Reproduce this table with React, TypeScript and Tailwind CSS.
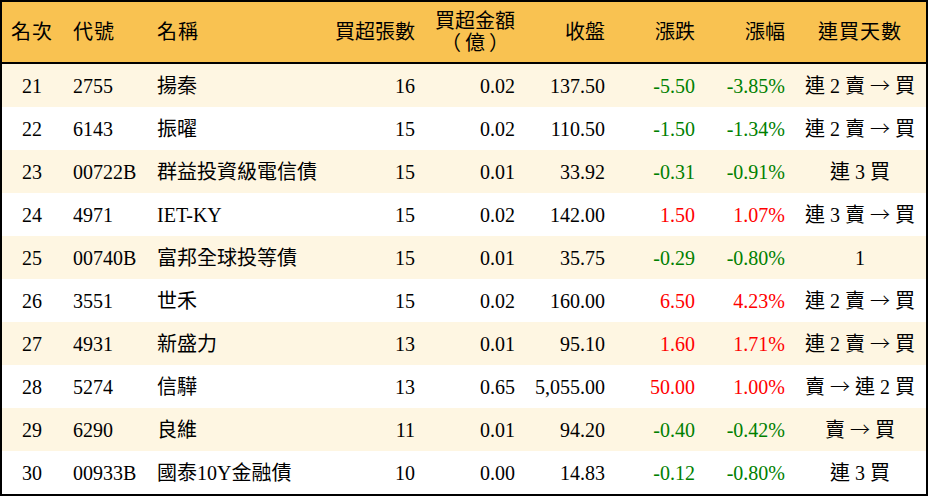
import React from "react";

type Row = {
  rank: string;
  code: string;
  name: string;
  qty: string;
  amt: string;
  close: string;
  chg: string;
  pct: string;
  days: string;
};

const rows: Row[] = [
  { rank: "21", code: "2755", name: "揚秦", qty: "16", amt: "0.02", close: "137.50", chg: "-5.50", pct: "-3.85%", days: "連 2 賣 → 買" },
  { rank: "22", code: "6143", name: "振曜", qty: "15", amt: "0.02", close: "110.50", chg: "-1.50", pct: "-1.34%", days: "連 2 賣 → 買" },
  { rank: "23", code: "00722B", name: "群益投資級電信債", qty: "15", amt: "0.01", close: "33.92", chg: "-0.31", pct: "-0.91%", days: "連 3 買" },
  { rank: "24", code: "4971", name: "IET-KY", qty: "15", amt: "0.02", close: "142.00", chg: "1.50", pct: "1.07%", days: "連 3 賣 → 買" },
  { rank: "25", code: "00740B", name: "富邦全球投等債", qty: "15", amt: "0.01", close: "35.75", chg: "-0.29", pct: "-0.80%", days: "1" },
  { rank: "26", code: "3551", name: "世禾", qty: "15", amt: "0.02", close: "160.00", chg: "6.50", pct: "4.23%", days: "連 2 賣 → 買" },
  { rank: "27", code: "4931", name: "新盛力", qty: "13", amt: "0.01", close: "95.10", chg: "1.60", pct: "1.71%", days: "連 2 賣 → 買" },
  { rank: "28", code: "5274", name: "信驊", qty: "13", amt: "0.65", close: "5,055.00", chg: "50.00", pct: "1.00%", days: "賣 → 連 2 買" },
  { rank: "29", code: "6290", name: "良維", qty: "11", amt: "0.01", close: "94.20", chg: "-0.40", pct: "-0.42%", days: "賣 → 買" },
  { rank: "30", code: "00933B", name: "國泰10Y金融債", qty: "10", amt: "0.00", close: "14.83", chg: "-0.12", pct: "-0.80%", days: "連 3 買" },
];

const font = { fontFamily: '"Liberation Serif", "Noto Sans CJK TC", serif' };

function Days({ text }: { text: string }) {
  const parts = text.split("→");
  return (
    <>
      {parts.map((p, i) => (
        <React.Fragment key={i}>
          {i > 0 && (
            <span className="font-['Noto_Sans_CJK_TC'] font-light">→</span>
          )}
          {p}
        </React.Fragment>
      ))}
    </>
  );
}

export default function App() {
  return (
    <div
      className="w-[928px] h-[496px] border-2 border-black bg-white text-black text-[20px] leading-[20px] overflow-hidden"
      style={font}
    >
      <div className="flex h-[62px] items-center bg-[#f9c251] border-b-2 border-black">
        <div className="w-[60px] text-center tracking-[1px]">名次</div>
        <div className="w-[84px] pl-[11px] tracking-[1px]">代號</div>
        <div className="w-[184px] pl-[11px] tracking-[1px]">名稱</div>
        <div className="w-[96px] pr-[11px] text-right">買超張數</div>
        <div className="w-[100px] pr-[11px] flex justify-end">
          <div className="flex flex-col items-center gap-[2px]">
            <span>買超金額</span>
            <span className="tracking-[4px] pl-[4px]">（億）</span>
          </div>
        </div>
        <div className="w-[90px] pr-[11px] text-right">收盤</div>
        <div className="w-[90px] pr-[11px] text-right">漲跌</div>
        <div className="w-[90px] pr-[11px] text-right">漲幅</div>
        <div className="w-[128px] text-center tracking-[1px]">連買天數</div>
      </div>
      {rows.map((r, i) => {
        const neg = r.chg.startsWith("-");
        const color = neg ? "text-[#008000]" : "text-[#ff0000]";
        return (
          <div
            key={r.rank}
            className={`flex h-[43px] items-center ${i % 2 === 0 ? "bg-[#fef6e2]" : "bg-white"}`}
          >
            <div className="w-[60px] text-center">{r.rank}</div>
            <div className="w-[84px] pl-[11px]">{r.code}</div>
            <div className="w-[184px] pl-[11px] whitespace-nowrap">{r.name}</div>
            <div className="w-[96px] pr-[11px] text-right">{r.qty}</div>
            <div className="w-[100px] pr-[11px] text-right">{r.amt}</div>
            <div className="w-[90px] pr-[11px] text-right">{r.close}</div>
            <div className={`w-[90px] pr-[11px] text-right ${color}`}>{r.chg}</div>
            <div className={`w-[90px] pr-[11px] text-right ${color}`}>{r.pct}</div>
            <div className="w-[128px] text-center whitespace-pre">
              <Days text={r.days} />
            </div>
          </div>
        );
      })}
    </div>
  );
}
